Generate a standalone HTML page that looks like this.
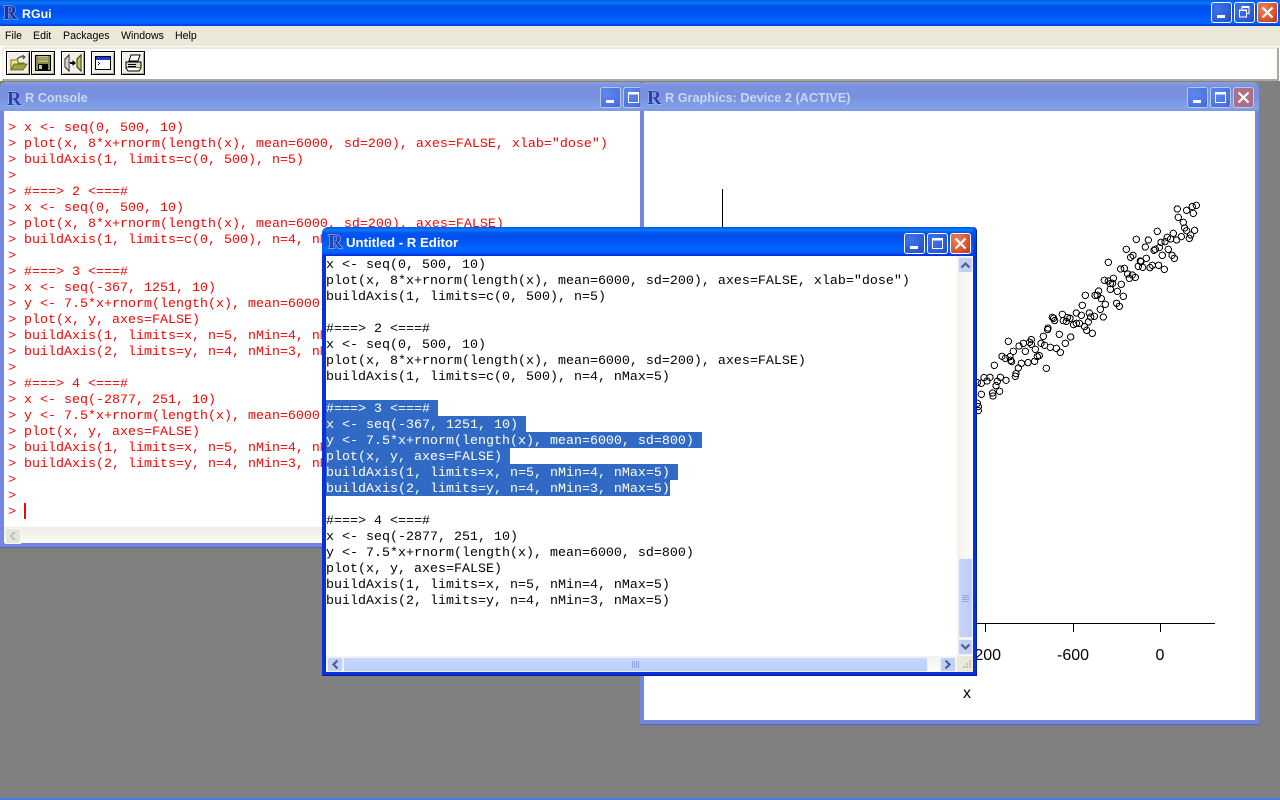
<!DOCTYPE html>
<html>
<head>
<meta charset="utf-8">
<title>RGui</title>
<style>
html,body{margin:0;padding:0;width:1280px;height:800px;overflow:hidden;background:#808080;font-family:"Liberation Sans",sans-serif}
.a{position:absolute}
#top{left:0;top:0;width:1280px;height:26px;background:linear-gradient(180deg,#0058e8 0,#0a7cf8 3px,#0053ee 6px,#0050ee 11px,#0066ff 22px,#005bff 24px,#003dd7 25px,#003dd7 26px)}
.title{position:absolute;font-weight:bold;font-size:13px;line-height:16px;white-space:nowrap}
.btn{position:absolute;width:19px;height:19px;border:1px solid #fff;border-radius:3px;background:radial-gradient(circle at 30% 30%,#3f74e8 0,#2f5fdc 55%,#2449c2 100%)}
.btn.c{background:radial-gradient(circle at 30% 30%,#e8805f 0,#dc5a35 55%,#bf3310 100%)}
.in{border-color:#b9c8f2;background:radial-gradient(circle at 30% 30%,#5f87ec 0,#4f77e4 60%,#4165d8 100%)}
.in.c{background:#ab6f86;border-color:#b9c8f2}
.btn svg{position:absolute;left:0;top:0;width:19px;height:19px}
#menu{left:0;top:26px;width:1280px;height:20px;background:#ece9d8;font-size:10.6px;color:#000}
#menu span{position:absolute;top:2px;line-height:14px;padding-top:1px}
#tbar{left:0;top:46px;width:1280px;height:35px;background:#fff}
#tbox{position:absolute;left:2px;top:1px;width:1274px;height:30px;background:#fff;border:1px solid #f1efe2;border-top:2px solid #ece9d8;border-right:2px solid #aca899;border-bottom:2px solid #aca899}
.tb{position:absolute;top:51px;width:22px;height:22px;border:1px solid #000;background:#f1efe4;box-shadow:inset 1px 1px 0 #fff,inset -1px -1px 0 #aca899}
.tb svg{position:absolute;left:0;top:0;width:22px;height:22px}
.win{position:absolute;box-sizing:border-box}
.ina{background:linear-gradient(180deg,#8a9fe4 0,#7a91de 4px,#7790df 14px,#82a2e8 26px,#7e97e2 29px);border-radius:6px 6px 0 0}
pre{margin:0;font-family:"Liberation Mono",monospace;font-size:13.333px;line-height:16px;position:absolute;white-space:pre}
.selbg{position:absolute;left:326px;height:16px;background:#316ac5}
.rl{font-family:"Liberation Serif",serif;font-weight:bold;paint-order:stroke;stroke-linejoin:round}
</style>
</head>
<body>

<div class="a" style="left:0;top:81px;width:1280px;height:717px;background:#808080"></div>
<div class="a" style="left:0;top:798px;width:1280px;height:2px;background:#3c7fe0"></div>

<!-- main title -->
<div id="top" class="a">
  <svg class="a" style="left:1px;top:1px" width="20" height="22"><text class="rl" x="2" y="18" font-size="20" fill="#1c3098" stroke="#9fb0dc" stroke-width="1.2">R</text></svg>
  <div class="title" style="left:22px;top:6px;color:#fff;font-size:12.4px">RGui</div>
  <div class="btn" style="left:1211px;top:2px"><svg><rect x="5" y="12" width="8" height="3" fill="#fff"/></svg></div>
  <div class="btn" style="left:1234px;top:2px"><svg><path d="M7 3.5h7v7h-2M7 3.5v2.5M7 4.5h7" fill="none" stroke="#fff"/><rect x="4.5" y="7" width="7" height="7" fill="none" stroke="#fff"/><path d="M4 7.5h8" stroke="#fff"/></svg></div>
  <div class="btn c" style="left:1257px;top:2px"><svg><path d="M4.5 4.5l10 10M14.5 4.5l-10 10" stroke="#fff" stroke-width="2.2"/></svg></div>
</div>

<!-- menu -->
<div id="menu" class="a">
  <span style="left:5px">File</span><span style="left:33px">Edit</span><span style="left:63px">Packages</span><span style="left:121px">Windows</span><span style="left:175px">Help</span>
</div>

<!-- toolbar -->
<div id="tbar" class="a"><div id="tbox"></div></div>
<div class="tb" style="left:6px"><svg viewBox="0 0 22 22"><path d="M4 18V8h7v3h6l-1 1" fill="#f6ee70" stroke="#6e6c30"/><path d="M4 18l3-6h13l-4 6z" fill="#a3a042" stroke="#555520" stroke-width=".8"/><path d="M10 7q3-3 7-2" fill="none" stroke="#444" stroke-width="1.2"/><path d="M15 3l3 2-2 2" fill="none" stroke="#444"/></svg></div>
<div class="tb" style="left:31px"><svg viewBox="0 0 22 22" shape-rendering="crispEdges"><rect x="3" y="3" width="16" height="16" fill="#000"/><rect x="4" y="4" width="14" height="14" fill="#8c8a40"/><rect x="6" y="4" width="10" height="6" fill="#c4c48a"/><path d="M6 6h10M6 8h10" stroke="#777750"/><rect x="6" y="12" width="10" height="6" fill="#000"/><rect x="7" y="13" width="3" height="4" fill="#c8c8a8"/></svg></div>
<div class="tb" style="left:61px"><svg viewBox="0 0 22 22"><path d="M7 3L3 7V15L7 19z" fill="#fff" stroke="#222"/><path d="M5 6V16" stroke="#aaa"/><path d="M19 3L15 7V15L19 19z" fill="#f2e64a" stroke="#222"/><path d="M17 6V16" stroke="#a8a030"/><path d="M8 11h3" stroke="#000" stroke-width="2"/><path d="M10.5 8l3.5 3-3.5 3z" fill="#000"/></svg></div>
<div class="tb" style="left:91px"><svg viewBox="0 0 22 22" shape-rendering="crispEdges"><rect x="3.5" y="4.5" width="15" height="13" fill="#fff" stroke="#000"/><rect x="4" y="5" width="14" height="3" fill="#1a3cd0"/><path d="M6 10.5h1M7 11.5h1M6 12.5h1" stroke="#000"/></svg></div>
<div class="tb" style="left:121px"><svg viewBox="0 0 22 22"><path d="M9 3h9l-2 6H7z" fill="#fff" stroke="#000"/><path d="M4 10h15v6H4z" fill="#d8d8d0" stroke="#000"/><path d="M4 16l2 3h11l2-3" fill="#fff" stroke="#000"/><path d="M6 12.5h8M6 14.5h8" stroke="#000"/><rect x="15" y="11.5" width="3" height="2" fill="#e8e040"/></svg></div>

<!-- console -->
<div class="win ina" style="left:0;top:82px;width:644px;height:466px;border-bottom:1px solid #5661bb">
  <div class="a" style="left:0;top:29px;width:4px;height:436px;background:#7587dc"></div>
  <div class="a" style="left:0;top:461px;width:644px;height:4px;background:#7587dc"></div>
  <div class="a" style="left:4px;top:29px;width:640px;height:432px;background:#fff"></div>
  <div class="a" style="left:4px;top:445px;width:640px;height:16px;background:linear-gradient(180deg,#eeede5,#fbfbf8)"></div>
  <div class="a" style="left:5px;top:446px;width:14px;height:14px;background:#e6e5dc;border:1px solid #f8f8f3;color:#bbb;font-size:0">
    <svg width="14" height="14"><path d="M9 3L5 7l4 4" fill="none" stroke="#c4c4ba" stroke-width="2.5"/></svg>
  </div>
</div>
<svg class="a" style="left:5px;top:87px" width="20" height="22"><text class="rl" x="2" y="18" font-size="20" fill="#2a40ac" stroke="#a9b8e6" stroke-width="1.2">R</text></svg>
<div class="title" style="left:25px;top:90px;color:#c9d6f5;font-size:12.7px">R Console</div>
<div class="btn in" style="left:600px;top:87px"><svg><rect x="5" y="12" width="8" height="3" fill="#fff"/></svg></div>
<div class="btn in" style="left:623px;top:87px"><svg><rect x="4.5" y="4.5" width="10" height="10" fill="none" stroke="#fff"/><path d="M4 5.5h11" stroke="#fff" stroke-width="2"/></svg></div>

<pre style="left:8px;top:121px;color:#f00;width:632px;height:406px;overflow:hidden">&gt; x &lt;- seq(0, 500, 10)
&gt; plot(x, 8*x+rnorm(length(x), mean=6000, sd=200), axes=FALSE, xlab="dose")
&gt; buildAxis(1, limits=c(0, 500), n=5)
&gt;
&gt; #===&gt; 2 &lt;===#
&gt; x &lt;- seq(0, 500, 10)
&gt; plot(x, 8*x+rnorm(length(x), mean=6000, sd=200), axes=FALSE)
&gt; buildAxis(1, limits=c(0, 500), n=4, nMax=5)
&gt;
&gt; #===&gt; 3 &lt;===#
&gt; x &lt;- seq(-367, 1251, 10)
&gt; y &lt;- 7.5*x+rnorm(length(x), mean=6000, sd=800)
&gt; plot(x, y, axes=FALSE)
&gt; buildAxis(1, limits=x, n=5, nMin=4, nMax=5)
&gt; buildAxis(2, limits=y, n=4, nMin=3, nMax=5)
&gt;
&gt; #===&gt; 4 &lt;===#
&gt; x &lt;- seq(-2877, 251, 10)
&gt; y &lt;- 7.5*x+rnorm(length(x), mean=6000, sd=800)
&gt; plot(x, y, axes=FALSE)
&gt; buildAxis(1, limits=x, n=5, nMin=4, nMax=5)
&gt; buildAxis(2, limits=y, n=4, nMin=3, nMax=5)
&gt;
&gt;
&gt;</pre>
<div class="a" style="left:24px;top:503px;width:2px;height:16px;background:#f00"></div>

<!-- graphics -->
<div class="win ina" style="left:640px;top:82px;width:619px;height:643px;border-bottom:1px solid #5661bb">
  <div class="a" style="left:0;top:29px;width:4px;height:613px;background:#7587dc"></div>
  <div class="a" style="left:615px;top:29px;width:4px;height:613px;background:#7587dc"></div>
  <div class="a" style="left:0;top:638px;width:619px;height:4px;background:#7587dc"></div>
  <div class="a" style="left:4px;top:29px;width:611px;height:609px;background:#fff"></div>
</div>
<svg class="a" style="left:645px;top:87px" width="20" height="22"><text class="rl" x="2" y="17" font-size="20" fill="#2a40ac" stroke="#a9b8e6" stroke-width="1.2">R</text></svg>
<div class="title" style="left:665px;top:90px;color:#c9d6f5;font-size:12.7px">R Graphics: Device 2 (ACTIVE)</div>
<div class="btn in" style="left:1187px;top:87px"><svg><rect x="5" y="12" width="8" height="3" fill="#fff"/></svg></div>
<div class="btn in" style="left:1210px;top:87px"><svg><rect x="4.5" y="4.5" width="10" height="10" fill="none" stroke="#fff"/><path d="M4 5.5h11" stroke="#fff" stroke-width="2"/></svg></div>
<div class="btn in c" style="left:1233px;top:87px"><svg><path d="M4.5 4.5l10 10M14.5 4.5l-10 10" stroke="#fff" stroke-width="2.2"/></svg></div>

<svg class="a" style="left:0;top:0" width="1280" height="800" pointer-events="none">
  <path d="M722.5 189V240M960 623.5H1215M985.5 623V632M1073.5 623V632M1160.5 623V632" stroke="#000" fill="none" shape-rendering="crispEdges"/>
  <text x="1073" y="660" text-anchor="middle" font-family="Liberation Sans" font-size="16">-600</text>
  <text x="1160" y="660" text-anchor="middle" font-family="Liberation Sans" font-size="16">0</text>
  <text x="985" y="660" text-anchor="middle" font-family="Liberation Sans" font-size="16">-200</text>
  <text x="967" y="698" text-anchor="middle" font-family="Liberation Sans" font-size="16">x</text>
  <g transform="translate(960 190) scale(.3333)" fill="none" stroke="#000" stroke-width="3" shape-rendering="crispEdges">
  <circle cx="709" cy="46" r="9.5"/><circle cx="697" cy="50" r="9.5"/><circle cx="680" cy="61" r="9.5"/><circle cx="700" cy="70" r="9.5"/><circle cx="652" cy="57" r="9.5"/><circle cx="655" cy="82" r="9.5"/><circle cx="670" cy="97" r="9.5"/><circle cx="674" cy="114" r="9.5"/><circle cx="680" cy="122" r="9.5"/><circle cx="704" cy="121" r="9.5"/><circle cx="592" cy="124" r="9.5"/><circle cx="640" cy="130" r="9.5"/><circle cx="692" cy="135" r="9.5"/><circle cx="688" cy="145" r="9.5"/><circle cx="664" cy="140" r="9.5"/><circle cx="650" cy="150" r="9.5"/><circle cx="632" cy="147" r="9.5"/><circle cx="622" cy="142" r="9.5"/><circle cx="615" cy="155" r="9.5"/><circle cx="603" cy="157" r="9.5"/><circle cx="565" cy="150" r="9.5"/><circle cx="529" cy="148" r="9.5"/><circle cx="598" cy="173" r="9.5"/><circle cx="586" cy="178" r="9.5"/><circle cx="582" cy="181" r="9.5"/><circle cx="556" cy="171" r="9.5"/><circle cx="625" cy="178" r="9.5"/><circle cx="607" cy="196" r="9.5"/><circle cx="636" cy="196" r="9.5"/><circle cx="643" cy="205" r="9.5"/><circle cx="499" cy="178" r="9.5"/><circle cx="519" cy="196" r="9.5"/><circle cx="512" cy="202" r="9.5"/><circle cx="445" cy="217" r="9.5"/><circle cx="559" cy="205" r="9.5"/><circle cx="541" cy="213" r="9.5"/><circle cx="543" cy="215" r="9.5"/><circle cx="535" cy="229" r="9.5"/><circle cx="548" cy="232" r="9.5"/><circle cx="570" cy="233" r="9.5"/><circle cx="577" cy="226" r="9.5"/><circle cx="596" cy="226" r="9.5"/><circle cx="613" cy="238" r="9.5"/><circle cx="482" cy="237" r="9.5"/><circle cx="493" cy="235" r="9.5"/><circle cx="503" cy="252" r="9.5"/><circle cx="517" cy="255" r="9.5"/><circle cx="526" cy="262" r="9.5"/><circle cx="508" cy="265" r="9.5"/><circle cx="433" cy="271" r="9.5"/><circle cx="445" cy="273" r="9.5"/><circle cx="460" cy="265" r="9.5"/><circle cx="458" cy="280" r="9.5"/><circle cx="451" cy="281" r="9.5"/><circle cx="484" cy="283" r="9.5"/><circle cx="451" cy="298" r="9.5"/><circle cx="472" cy="304" r="9.5"/><circle cx="490" cy="319" r="9.5"/><circle cx="416" cy="303" r="9.5"/><circle cx="405" cy="316" r="9.5"/><circle cx="412" cy="316" r="9.5"/><circle cx="376" cy="316" r="9.5"/><circle cx="424" cy="326" r="9.5"/><circle cx="436" cy="343" r="9.5"/><circle cx="367" cy="346" r="9.5"/><circle cx="421" cy="358" r="9.5"/><circle cx="470" cy="340" r="9.5"/><circle cx="478" cy="349" r="9.5"/><circle cx="430" cy="381" r="9.5"/><circle cx="403" cy="379" r="9.5"/><circle cx="392" cy="381" r="9.5"/><circle cx="388" cy="369" r="9.5"/><circle cx="349" cy="369" r="9.5"/><circle cx="364" cy="376" r="9.5"/><circle cx="307" cy="373" r="9.5"/><circle cx="277" cy="382" r="9.5"/><circle cx="281" cy="385" r="9.5"/><circle cx="284" cy="392" r="9.5"/><circle cx="310" cy="392" r="9.5"/><circle cx="322" cy="383" r="9.5"/><circle cx="330" cy="385" r="9.5"/><circle cx="319" cy="394" r="9.5"/><circle cx="341" cy="404" r="9.5"/><circle cx="349" cy="400" r="9.5"/><circle cx="358" cy="400" r="9.5"/><circle cx="385" cy="396" r="9.5"/><circle cx="374" cy="410" r="9.5"/><circle cx="380" cy="421" r="9.5"/><circle cx="397" cy="430" r="9.5"/><circle cx="264" cy="414" r="9.5"/><circle cx="263" cy="419" r="9.5"/><circle cx="250" cy="439" r="9.5"/><circle cx="298" cy="433" r="9.5"/><circle cx="332" cy="441" r="9.5"/><circle cx="316" cy="460" r="9.5"/><circle cx="145" cy="454" r="9.5"/><circle cx="214" cy="449" r="9.5"/><circle cx="209" cy="457" r="9.5"/><circle cx="190" cy="460" r="9.5"/><circle cx="177" cy="468" r="9.5"/><circle cx="160" cy="484" r="9.5"/><circle cx="196" cy="484" r="9.5"/><circle cx="214" cy="463" r="9.5"/><circle cx="226" cy="478" r="9.5"/><circle cx="243" cy="460" r="9.5"/><circle cx="254" cy="466" r="9.5"/><circle cx="271" cy="472" r="9.5"/><circle cx="289" cy="475" r="9.5"/><circle cx="301" cy="487" r="9.5"/><circle cx="238" cy="497" r="9.5"/><circle cx="232" cy="500" r="9.5"/><circle cx="224" cy="514" r="9.5"/><circle cx="204" cy="518" r="9.5"/><circle cx="184" cy="520" r="9.5"/><circle cx="126" cy="499" r="9.5"/><circle cx="136" cy="505" r="9.5"/><circle cx="150" cy="500" r="9.5"/><circle cx="152" cy="511" r="9.5"/><circle cx="155" cy="515" r="9.5"/><circle cx="103" cy="526" r="9.5"/><circle cx="175" cy="534" r="9.5"/><circle cx="168" cy="551" r="9.5"/><circle cx="166" cy="559" r="9.5"/><circle cx="259" cy="535" r="9.5"/><circle cx="72" cy="563" r="9.5"/><circle cx="90" cy="562" r="9.5"/><circle cx="81" cy="573" r="9.5"/><circle cx="64" cy="580" r="9.5"/><circle cx="121" cy="562" r="9.5"/><circle cx="112" cy="574" r="9.5"/><circle cx="138" cy="571" r="9.5"/><circle cx="108" cy="587" r="9.5"/><circle cx="119" cy="604" r="9.5"/><circle cx="98" cy="609" r="9.5"/><circle cx="99" cy="618" r="9.5"/><circle cx="64" cy="613" r="9.5"/><circle cx="55" cy="650" r="9.5"/><circle cx="55" cy="662" r="9.5"/><circle cx="52" cy="640" r="9.5"/><circle cx="52" cy="578" r="9.5"/>
  </g>
</svg>

<!-- editor -->
<div class="win" style="left:322px;top:227px;width:655px;height:449px;background:linear-gradient(180deg,#0058e8 0,#0a7cf8 3px,#0053ee 6px,#0050ee 11px,#0066ff 22px,#005bff 26px,#0831d9 28px,#0831d9 100%);border-radius:6px 6px 0 0;border-bottom:1px solid #001ea0">
  <div class="a" style="left:4px;top:29px;width:647px;height:416px;background:#fff"></div>
  <div class="a" style="left:651px;top:0;width:3px;height:448px;background:linear-gradient(180deg,#0058e8,#0831d9 28px);border-right:1px solid #001ea0;box-sizing:content-box;border-radius:0 6px 0 0"></div>
  <!-- vscroll -->
  <div class="a" style="left:635px;top:29px;width:16px;height:400px;background:linear-gradient(90deg,#f3f2ea,#fdfdfa)"></div>
  <div class="a" style="left:636px;top:30px;width:13px;height:14px;border:1px solid #eef2fd;border-radius:2px;background:#c0d0f8"><svg width="13" height="14"><path d="M2.5 9.5l4-4 4 4" fill="none" stroke="#4d6185" stroke-width="2.2"/></svg></div>
  <div class="a" style="left:636px;top:331px;width:13px;height:78px;border:1px solid #eef2fd;border-radius:2px;background:linear-gradient(90deg,#c6d6fc,#bccefa)"><svg width="13" height="78"><path d="M3 36.5h7M3 38.5h7M3 40.5h7M3 42.5h7" stroke="#8fa4dc"/></svg></div>
  <div class="a" style="left:636px;top:412px;width:13px;height:14px;border:1px solid #eef2fd;border-radius:2px;background:#c0d0f8"><svg width="13" height="14"><path d="M2.5 4.5l4 4 4-4" fill="none" stroke="#4d6185" stroke-width="2.2"/></svg></div>
  <!-- hscroll -->
  <div class="a" style="left:4px;top:429px;width:631px;height:16px;background:linear-gradient(180deg,#f3f2ea,#fdfdfa)"></div>
  <div class="a" style="left:5px;top:430px;width:14px;height:13px;border:1px solid #eef2fd;border-radius:2px;background:#c0d0f8"><svg width="14" height="13"><path d="M9.5 2.5l-4 4 4 4" fill="none" stroke="#4d6185" stroke-width="2.2"/></svg></div>
  <div class="a" style="left:21px;top:430px;width:583px;height:13px;border:1px solid #eef2fd;border-radius:2px;background:linear-gradient(180deg,#c6d6fc,#bccefa)"><svg width="583" height="13"><path d="M288.5 3v7M290.5 3v7M292.5 3v7M294.5 3v7" stroke="#8fa4dc"/></svg></div>
  <div class="a" style="left:618px;top:430px;width:14px;height:13px;border:1px solid #eef2fd;border-radius:2px;background:#c0d0f8"><svg width="14" height="13"><path d="M4.5 2.5l4 4-4 4" fill="none" stroke="#4d6185" stroke-width="2.2"/></svg></div>
  <div class="a" style="left:635px;top:429px;width:16px;height:16px;background:#ece9d8"><svg width="16" height="16"><path d="M12 4h2v2h-2zM9 7h2v2H9zM12 7h2v2h-2zM6 10h2v2H6zM9 10h2v2H9zM12 10h2v2h-2z" fill="#c5c2b0"/></svg></div>
</div>
<svg class="a" style="left:326px;top:232px" width="20" height="22"><text class="rl" x="2" y="16" font-size="20" fill="#2a40ac" stroke="#a9b8e6" stroke-width="1.2">R</text></svg>
<div class="title" style="left:346px;top:235px;color:#fff;font-size:13.2px">Untitled - R Editor</div>
<div class="btn" style="left:904px;top:233px"><svg><rect x="5" y="12" width="8" height="3" fill="#fff"/></svg></div>
<div class="btn" style="left:927px;top:233px"><svg><rect x="4.5" y="4.5" width="10" height="10" fill="none" stroke="#fff"/><path d="M4 5.5h11" stroke="#fff" stroke-width="2"/></svg></div>
<div class="btn c" style="left:950px;top:233px"><svg><path d="M4.5 4.5l10 10M14.5 4.5l-10 10" stroke="#fff" stroke-width="2.2"/></svg></div>

<pre style="left:326px;top:258px;color:#000">x &lt;- seq(0, 500, 10)
plot(x, 8*x+rnorm(length(x), mean=6000, sd=200), axes=FALSE, xlab="dose")
buildAxis(1, limits=c(0, 500), n=5)

#===&gt; 2 &lt;===#
x &lt;- seq(0, 500, 10)
plot(x, 8*x+rnorm(length(x), mean=6000, sd=200), axes=FALSE)
buildAxis(1, limits=c(0, 500), n=4, nMax=5)</pre>
<div class="selbg" style="top:400px;width:112px"></div>
<div class="selbg" style="top:416px;width:200px"></div>
<div class="selbg" style="top:432px;width:376px"></div>
<div class="selbg" style="top:448px;width:184px"></div>
<div class="selbg" style="top:464px;width:352px"></div>
<div class="selbg" style="top:480px;width:344px"></div>
<pre style="left:326px;top:402px;color:#fff">#===&gt; 3 &lt;===#
x &lt;- seq(-367, 1251, 10)
y &lt;- 7.5*x+rnorm(length(x), mean=6000, sd=800)
plot(x, y, axes=FALSE)
buildAxis(1, limits=x, n=5, nMin=4, nMax=5)
buildAxis(2, limits=y, n=4, nMin=3, nMax=5)</pre>
<pre style="left:326px;top:514px;color:#000">#===&gt; 4 &lt;===#
x &lt;- seq(-2877, 251, 10)
y &lt;- 7.5*x+rnorm(length(x), mean=6000, sd=800)
plot(x, y, axes=FALSE)
buildAxis(1, limits=x, n=5, nMin=4, nMax=5)
buildAxis(2, limits=y, n=4, nMin=3, nMax=5)</pre>

</body>
</html>
